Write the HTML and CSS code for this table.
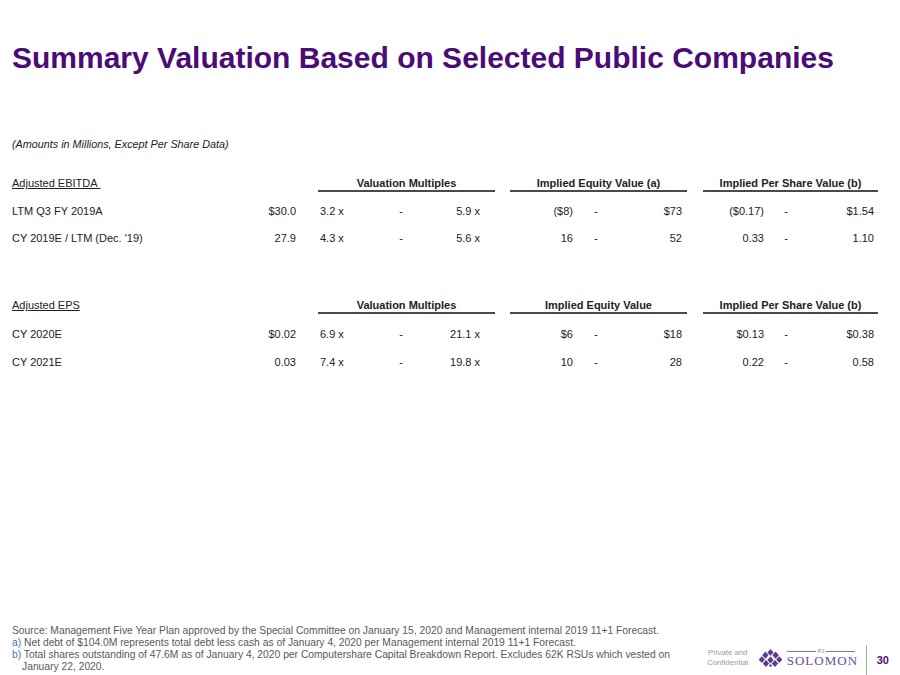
FILE: index.html
```html
<!DOCTYPE html>
<html lang="en">
<head>
<meta charset="utf-8">
<title>Summary Valuation Based on Selected Public Companies</title>
<link rel="stylesheet" href="styles.css">
</head>
<body>
<div class="page">
  <h1 class="title">Summary Valuation Based on Selected Public Companies</h1>
  <p class="note">(Amounts in Millions, Except Per Share Data)</p>

  <section class="table">
    <div class="row head">
      <div class="lbl"><span class="ul">Adjusted EBITDA&nbsp;</span></div>
      <div class="hm">Valuation Multiples</div>
      <div class="he">Implied Equity Value (a)</div>
      <div class="hp">Implied Per Share Value (b)</div>
    </div>
    <div class="row data first">
      <div class="lbl">LTM Q3 FY 2019A</div>
      <div class="val">$30.0</div>
      <div class="mlo">3.2 x</div><div class="mdash">-</div><div class="mhi">5.9 x</div>
      <div class="elo">($8)</div><div class="edash">-</div><div class="ehi">$73</div>
      <div class="plo">($0.17)</div><div class="pdash">-</div><div class="phi">$1.54</div>
    </div>
    <div class="row data">
      <div class="lbl">CY 2019E / LTM (Dec. '19)</div>
      <div class="val">27.9</div>
      <div class="mlo">4.3 x</div><div class="mdash">-</div><div class="mhi">5.6 x</div>
      <div class="elo">16</div><div class="edash">-</div><div class="ehi">52</div>
      <div class="plo">0.33</div><div class="pdash">-</div><div class="phi">1.10</div>
    </div>
  </section>

  <section class="table second">
    <div class="row head">
      <div class="lbl"><span class="ul">Adjusted EPS</span></div>
      <div class="hm">Valuation Multiples</div>
      <div class="he">Implied Equity Value</div>
      <div class="hp">Implied Per Share Value (b)</div>
    </div>
    <div class="row data first">
      <div class="lbl">CY 2020E</div>
      <div class="val">$0.02</div>
      <div class="mlo">6.9 x</div><div class="mdash">-</div><div class="mhi">21.1 x</div>
      <div class="elo">$6</div><div class="edash">-</div><div class="ehi">$18</div>
      <div class="plo">$0.13</div><div class="pdash">-</div><div class="phi">$0.38</div>
    </div>
    <div class="row data">
      <div class="lbl">CY 2021E</div>
      <div class="val">0.03</div>
      <div class="mlo">7.4 x</div><div class="mdash">-</div><div class="mhi">19.8 x</div>
      <div class="elo">10</div><div class="edash">-</div><div class="ehi">28</div>
      <div class="plo">0.22</div><div class="pdash">-</div><div class="phi">0.58</div>
    </div>
  </section>

  <footer class="footer">
    <div class="notes">
      <p>Source: Management Five Year Plan approved by the Special Committee on January 15, 2020 and Management internal 2019 11+1 Forecast.</p>
      <p class="fn"><span class="key">a)</span> Net debt of $104.0M represents total debt less cash as of January 4, 2020 per Management internal 2019 11+1 Forecast.</p>
      <p class="fn"><span class="key">b)</span> Total shares outstanding of 47.6M as of January 4, 2020 per Computershare Capital Breakdown Report. Excludes 62K RSUs which vested on January 22, 2020.</p>
    </div>
    <div class="brand">
      <div class="conf">Private and<br>Confidential</div>
      <div class="logo">
        <svg class="lotus" width="23" height="18" viewBox="0 0 23 18" aria-hidden="true">
          <g fill="#5E3A8E">
            <path d="M11.5 0 L14.6 3.4 L11.5 6.8 L8.4 3.4 Z"/>
            <path d="M6.4 2.6 L9.6 6.2 L6.4 9.8 L3.2 6.2 Z"/>
            <path d="M16.6 2.6 L19.8 6.2 L16.6 9.8 L13.4 6.2 Z"/>
            <path d="M11.5 7.4 L14.7 10.9 L11.5 14.4 L8.3 10.9 Z"/>
            <path d="M2.8 7.2 L5.9 10.6 L2.8 14 L-0.3 10.6 Z"/>
            <path d="M20.2 7.2 L23.3 10.6 L20.2 14 L17.1 10.6 Z"/>
            <path d="M7 11 L10.2 14.5 L7 18 L3.8 14.5 Z"/>
            <path d="M16 11 L19.2 14.5 L16 18 L12.8 14.5 Z"/>
            <path d="M11.5 15 L13.2 16.8 L11.5 18 L9.8 16.8 Z"/>
          </g>
        </svg>
        <div class="wordmark">
          <div class="pi"><span class="rule"></span><span class="pitext">PJ</span><span class="rule"></span></div>
          <div class="solomon">SOLOMON</div>
        </div>
      </div>
      <div class="pagenum">30</div>
    </div>
  </footer>
</div>
</body>
</html>
```
FILE: styles.css
```css
* { box-sizing: border-box; }

html, body {
  margin: 0;
  padding: 0;
  background: #ffffff;
}

body {
  font-family: "Liberation Sans", Arial, sans-serif;
  color: #222222;
}

.page {
  width: 900px;
  height: 675px;
  padding: 41px 0 0 12px;
  display: flex;
  flex-direction: column;
  overflow: hidden;
}

.title {
  margin: 0;
  font-size: 30px;
  line-height: 34px;
  font-weight: 700;
  color: #4B0C77;
  white-space: nowrap;
}

.note {
  margin: 63px 0 0 0;
  font-size: 10.8px;
  line-height: 13px;
  font-style: italic;
  color: #222222;
}

.table {
  margin-top: 26px;
  display: flex;
  flex-direction: column;
}

.table.second {
  margin-top: 47px;
}

.row {
  display: grid;
  grid-template-columns: 230px 54px 22px 72px 22px 68px 15px 15px 63px 46px 63px 5px 16px 61px 44px 66px 4px;
  font-size: 11px;
  align-items: start;
}

.row.head {
  line-height: 13px;
}

.row.data {
  height: 27px;
  line-height: 27px;
}

.table.second .row.data {
  height: 28px;
  line-height: 28px;
}

.row.data.first {
  margin-top: 6px;
}

.lbl { grid-column: 1; white-space: nowrap; }
.val { grid-column: 2; text-align: right; }
.mlo { grid-column: 4; padding-left: 2px; }
.mdash { grid-column: 5; text-align: center; }
.mhi { grid-column: 6; text-align: right; }
.elo { grid-column: 9; text-align: right; }
.edash { grid-column: 10; text-align: center; }
.ehi { grid-column: 11; text-align: right; }
.plo { grid-column: 14; text-align: right; }
.pdash { grid-column: 15; text-align: center; }
.phi { grid-column: 16; text-align: right; }

.ul {
  text-decoration: underline;
  text-underline-offset: 1px;
}

.hm, .he, .hp {
  font-weight: 700;
  text-align: center;
  border-bottom: 2px solid #4a4a4a;
  white-space: nowrap;
}

.hm { grid-column: 4 / 8; }
.he { grid-column: 9 / 13; }
.hp { grid-column: 14 / 18; }

.footer {
  margin-top: auto;
  display: flex;
  justify-content: space-between;
  align-items: flex-end;
}

.notes {
  width: 670px;
  margin-bottom: 2px;
  font-size: 10.3px;
  line-height: 12px;
  color: #595959;
}

.notes p {
  margin: 0;
}

.notes .fn {
  padding-left: 10px;
  text-indent: -10px;
}

.key {
  color: #4472C4;
}

.brand {
  height: 30px;
  display: flex;
  align-items: center;
  margin-right: 11px;
}

.conf {
  width: 44px;
  margin-bottom: 4px;
  font-size: 7.8px;
  line-height: 10px;
  text-align: center;
  color: #9a9a9a;
}

.logo {
  margin-left: 9px;
  display: flex;
  align-items: center;
  gap: 5px;
  margin-bottom: 4px;
}

.lotus {
  display: block;
}

.wordmark {
  display: flex;
  flex-direction: column;
  width: 68px;
}

.pi {
  display: flex;
  align-items: center;
  height: 6px;
  gap: 2px;
}

.rule {
  flex: 1;
  height: 1px;
  background: #8a70b3;
}

.pitext {
  font-size: 5px;
  line-height: 6px;
  color: #8a70b3;
}

.solomon {
  font-family: "Liberation Serif", "Times New Roman", serif;
  font-size: 13px;
  line-height: 14px;
  letter-spacing: 1px;
  color: #6A4C9C;
  white-space: nowrap;
}

.pagenum {
  align-self: stretch;
  margin-left: 11px;
  padding-left: 10px;
  border-left: 1px solid #a6a6a6;
  display: flex;
  align-items: center;
  font-size: 11px;
  font-weight: 700;
  color: #4B0C77;
}
```
